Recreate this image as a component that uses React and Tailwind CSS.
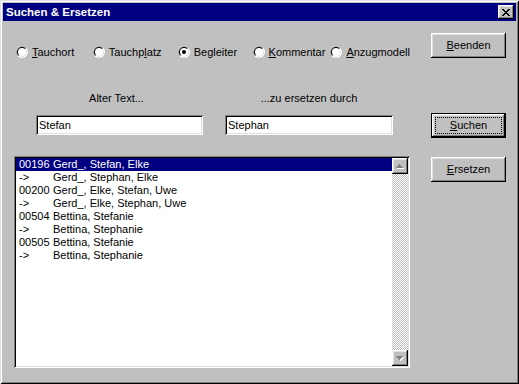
const raised =
	"shadow-[inset_-1px_-1px_0_#000,inset_1px_1px_0_#fff,inset_-2px_-2px_0_#808080,inset_2px_2px_0_#dfdfdf]";
const sunken =
	"shadow-[inset_1px_1px_0_#808080,inset_-1px_-1px_0_#fff,inset_2px_2px_0_#000,inset_-2px_-2px_0_#dfdfdf]";

const rows = [
	["00196", "Gerd_, Stefan, Elke"],
	["->", "Gerd_, Stephan, Elke"],
	["00200", "Gerd_, Elke, Stefan, Uwe"],
	["->", "Gerd_, Elke, Stephan, Uwe"],
	["00504", "Bettina, Stefanie"],
	["->", "Bettina, Stephanie"],
	["00505", "Bettina, Stefanie"],
	["->", "Bettina, Stephanie"],
];

const closeGlyph = ["11000011", "01100110", "00111100", "00011000", "00111100", "01100110", "11000011"];

const CloseIcon = () => (
	<svg width="8" height="7" viewBox="0 0 8 7" shapeRendering="crispEdges">
		{closeGlyph.map((r, y) =>
			r.split("").map((c, x) => (c === "1" ? <rect key={`${x}-${y}`} x={x} y={y} width="1" height="1" fill="#000" /> : null))
		)}
	</svg>
);

const Radio = ({ checked }) => (
	<svg width="12" height="12" viewBox="0 0 12 12" className="shrink-0">
		<circle cx="6" cy="6" r="6" fill="#fff" />
		<path d="M1.76 10.24 A6 6 0 0 1 10.24 1.76 Z" fill="#808080" />
		<circle cx="6" cy="6" r="5" fill="#dfdfdf" />
		<path d="M2.46 9.54 A5 5 0 0 1 9.54 2.46 Z" fill="#000" />
		<circle cx="6" cy="6" r="4" fill="#fff" />
		{checked && <circle cx="6" cy="6" r="2" fill="#000" />}
	</svg>
);

const Label = ({ text, u }) => (
	<span>
		{text.slice(0, u)}
		<u>{text[u]}</u>
		{text.slice(u + 1)}
	</span>
);

const RadioItem = ({ text, u, checked, w }) => (
	<div className={`flex items-center gap-[4px] ${w}`}>
		<Radio checked={checked} />
		{u === undefined ? <span>{text}</span> : <Label text={text} u={u} />}
	</div>
);

const Button = ({ text, u, def }) =>
	def ? (
		<div className="w-[75px] h-[25px] border border-black">
			<div className={`w-full h-full ${raised} flex items-center justify-center p-[3px]`}>
				<div className="w-full h-full border border-dotted border-black flex items-center justify-center">
					<Label text={text} u={u} />
				</div>
			</div>
		</div>
	) : (
		<div className={`w-[75px] h-[25px] ${raised} flex items-center justify-center`}>
			<Label text={text} u={u} />
		</div>
	);

const ArrowUp = () => (
	<svg width="16" height="16" viewBox="0 0 16 16" shapeRendering="crispEdges">
		<path d="M8 7h1v1h1v1h1v1h1v1H5v-1h1V9h1V8h1z" fill="#fff" />
		<path d="M7 6h1v1h1v1h1v1h1v1H4V9h1V8h1V7h1z" fill="#808080" />
	</svg>
);

const ArrowDown = () => (
	<svg width="16" height="16" viewBox="0 0 16 16" shapeRendering="crispEdges">
		<path d="M5 7h7v1h-1v1h-1v1H9v1H8v-1H7V9H6V8H5z" fill="#fff" />
		<path d="M4 6h7v1h-1v1H9v1H8v1H7V9H6V8H5V7H4z" fill="#808080" />
	</svg>
);

const App = () => {
	return (
		<div className="w-[519px] h-[384px] bg-[#c0c0c0] p-[3px] flex flex-col font-['Liberation_Sans',Arial,sans-serif] text-[11px] leading-[13px] text-black shadow-[inset_1px_1px_0_#dfdfdf,inset_-1px_-1px_0_#000,inset_2px_2px_0_#fff,inset_-2px_-2px_0_#808080]">
			{/* Title bar */}
			<div className="h-[18px] bg-[#000080] flex items-center justify-between pl-[3px] pr-[2px]">
				<span className="text-white font-bold text-[11.5px]">Suchen &amp; Ersetzen</span>
				<div className={`w-[16px] h-[14px] ${raised} bg-[#c0c0c0] flex items-center justify-center`}>
					<CloseIcon />
				</div>
			</div>

			{/* Body */}
			<div className="flex-1 flex pl-[11px] pr-[10px]">
				{/* Left column */}
				<div className="w-[396px] flex flex-col">
					<div className="mt-[24px] h-[14px] flex items-center pl-[2px] whitespace-nowrap">
						<RadioItem text="Tauchort" u={0} w="w-[77px]" />
						<RadioItem text="Tauchplatz" u={6} w="w-[85px]" />
						<RadioItem text="Begleiter" checked w="w-[75px]" />
						<RadioItem text="Kommentar" u={0} w="w-[78px]" />
						<RadioItem text="Anzugmodell" u={0} />
					</div>

					<div className="mt-[33px] flex pl-[22px] gap-[22px]">
						<div className="w-[161px] text-center">Alter Text...</div>
						<div className="ml-[6px] w-[168px] text-center">...zu ersetzen durch</div>
					</div>

					<div className="mt-[10px] flex pl-[22px] gap-[22px]">
						<div className={`w-[167px] h-[20px] bg-white ${sunken} flex items-center px-[3px]`}>Stefan</div>
						<div className={`w-[168px] h-[20px] bg-white ${sunken} flex items-center px-[3px]`}>Stephan</div>
					</div>

					{/* List */}
					<div className={`mt-[21px] h-[212px] bg-white ${sunken} p-[2px] flex`}>
						<div className="flex-1 flex flex-col">
							{rows.map(([id, names], i) => (
								<div key={i} className={`h-[13px] flex pl-[3px] whitespace-nowrap ${i === 0 ? "bg-[#000080] text-white" : ""}`}>
									<span className="w-[34px]">{id}</span>
									<span>{names}</span>
								</div>
							))}
						</div>
						<div className="w-[16px] flex flex-col bg-[image:repeating-conic-gradient(#c0c0c0_0%_25%,#fff_0%_50%)] bg-[length:2px_2px]">
							<div className={`h-[16px] bg-[#c0c0c0] ${raised}`}>
								<ArrowUp />
							</div>
							<div className="flex-1" />
							<div className={`h-[16px] bg-[#c0c0c0] ${raised}`}>
								<ArrowDown />
							</div>
						</div>
					</div>
				</div>

				{/* Right column */}
				<div className="ml-[21px] flex flex-col">
					<div className="mt-[12px]">
						<Button text="Beenden" u={0} />
					</div>
					<div className="mt-[55px]">
						<Button text="Suchen" u={0} def />
					</div>
					<div className="mt-[19px]">
						<Button text="Ersetzen" u={0} />
					</div>
				</div>
			</div>
		</div>
	);
};

export default App;
